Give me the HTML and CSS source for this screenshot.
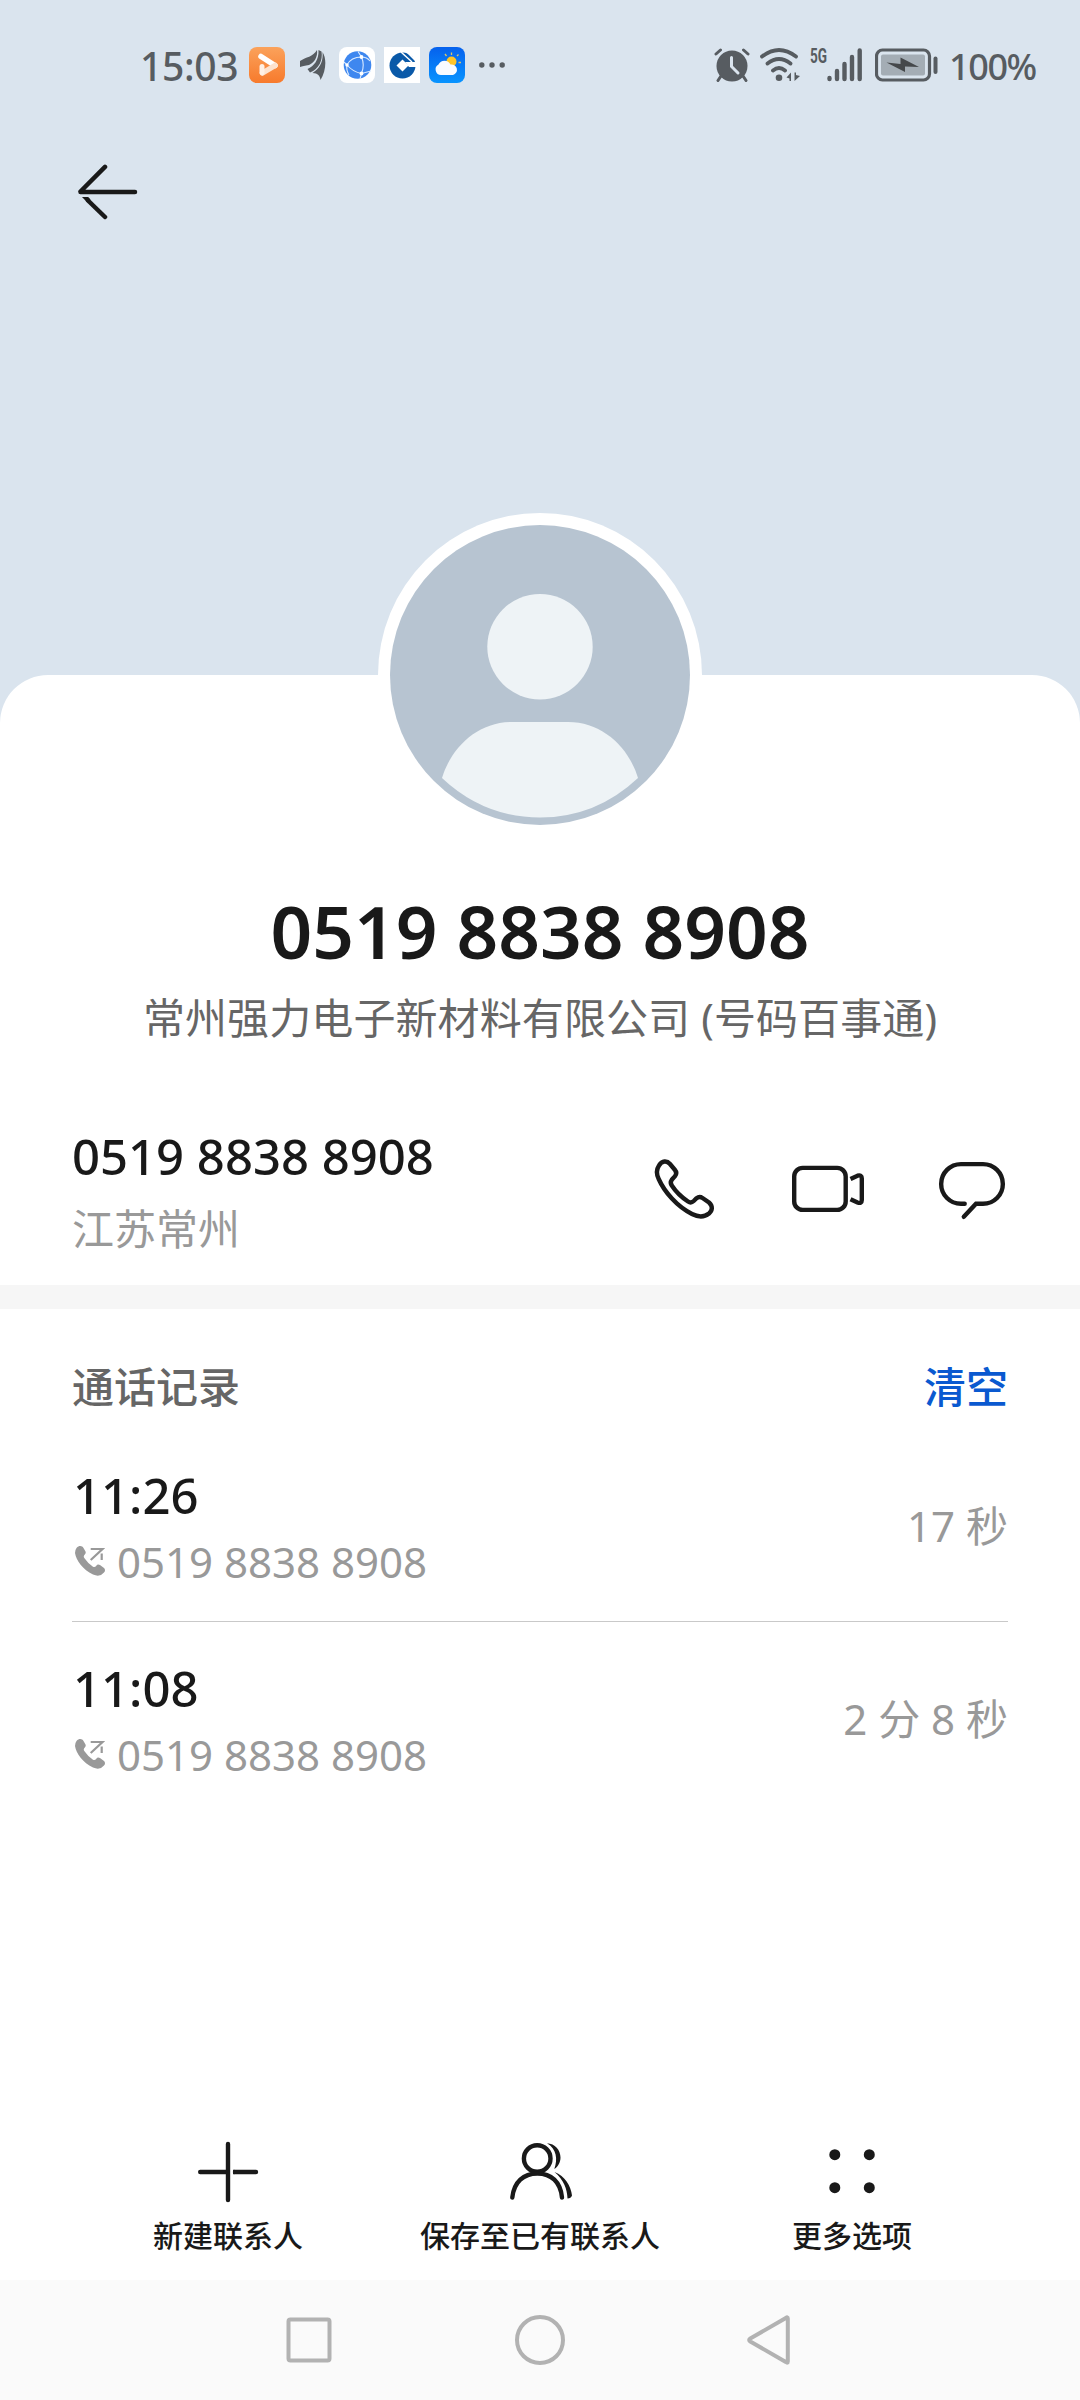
FILE: index.html
```html
<!DOCTYPE html>
<html lang="zh-CN">
<head>
<meta charset="utf-8">
<title>联系人详情</title>
<link rel="stylesheet" href="styles.css">
</head>
<body>
<div class="screen">
  <header class="hero">
    <div class="status">
      <div class="status-left">
        <span class="clock">15:03</span>
        <svg class="app" viewBox="0 0 36 36">
          <defs><linearGradient id="orange" x1="0" y1="0" x2="0" y2="1"><stop offset="0" stop-color="#fba25b"/><stop offset="1" stop-color="#f77a2c"/></linearGradient></defs>
          <rect width="36" height="36" rx="8" fill="url(#orange)"/>
          <path d="M12 9.500L26 18.500" stroke="#fff" stroke-width="5.500" stroke-linecap="round"/>
          <path d="M26 18.500L13.500 26" stroke="#fde3cf" stroke-width="5.500" stroke-linecap="round"/>
          <path d="M13 19.500V25.500" stroke="#fff0e4" stroke-width="5" stroke-linecap="round"/>
        </svg>
        <svg class="wing" viewBox="0 0 26 30" fill="#575c61">
          <path d="M0 11C6 7 13 7 17 0C18 7 14 13 9 15C5 16 2 16 0 17Z"/>
          <path d="M7.500 19C14 16 19 10 18.500 0L21.500 1.500C23 10 19 19 10 22.500Z"/>
          <path d="M12.500 23C20 18 23.500 11 22.500 2C27 9 26 21 20.500 30C20 26 18 23 12.500 23Z"/>
        </svg>
        <svg class="app" viewBox="0 0 36 36">
          <rect width="36" height="36" rx="8" fill="#fff"/><circle cx="18.500" cy="18" r="13.800" fill="#3e87ef"/>
          <g fill="none" stroke="#d9eaff" stroke-width="1.100"><path d="M22.500 10Q12 10 8 18Q14 25 22.500 26.500Q26 18 22.500 10M22.500 10L19 4.500M22.500 10Q28 10 31 14M8 18L5 15M8 18Q7 23 10 28M22.500 26.500L32 24M22.500 26.500L21 32"/></g>
          <g fill="#fff"><circle cx="22.500" cy="10" r="1.900"/><circle cx="8" cy="18" r="1.700"/><circle cx="22.500" cy="26.500" r="1.900"/></g>
        </svg>
        <svg class="app" viewBox="0 0 36 36">
          <rect width="36" height="36" fill="#fff"/><circle cx="18.500" cy="18.500" r="13" fill="#0a59a8"/>
          <path d="M18.500 12.500L24.500 18.500L18.500 24.500L12.500 18.500Z" fill="#fff"/>
          <path d="M21 15H33V20H25Z" fill="#fff"/><path d="M17 5L28 15M21 3L31 13" stroke="#fff" stroke-width="1.500"/>
        </svg>
        <svg class="app" viewBox="0 0 36 36">
          <defs><linearGradient id="sky" x1="0" y1="0" x2="0" y2="1"><stop offset="0" stop-color="#0661ed"/><stop offset="1" stop-color="#0894ff"/></linearGradient></defs>
          <rect width="36" height="36" rx="8" fill="url(#sky)"/>
          <path d="M22.500 5.500V8M29.500 7.500L28 9M32 15.500H29.500M16 7L17.500 9" stroke="#d9c36a" stroke-width="1.300"/>
          <circle cx="22.500" cy="14.500" r="5" fill="#ffc529"/>
          <path d="M12 28A5.600 5.600 0 0 1 9.500 17.500A6.600 6.600 0 0 1 21.500 17.500A5.400 5.400 0 0 1 24 28Z" fill="#f8fbff"/>
        </svg>
        <svg class="more" viewBox="0 0 26 6" fill="#575c61"><circle cx="2.800" cy="3" r="2.700"/><circle cx="13" cy="3" r="2.700"/><circle cx="23.200" cy="3" r="2.700"/></svg>
      </div>
      <div class="status-right">
        <svg class="alarm" viewBox="0 0 36 34">
          <circle cx="18" cy="18" r="15.500" fill="#575c61"/>
          <path d="M2 6L6.500 2M34 6L29.500 2M7 28L4 32.500M29 28L32 32.500" stroke="#575c61" stroke-width="3" stroke-linecap="round"/>
          <path d="M17.500 9.500V18.500L24 25" fill="none" stroke="#dae4ee" stroke-width="3" stroke-linecap="round"/>
        </svg>
        <svg class="wifi" viewBox="0 0 40 34" fill="none" stroke="#575c61" stroke-width="3.800" stroke-linecap="round">
          <path d="M2 8.500Q19 -4.500 36 8.500M7.500 15.500Q19 6.500 30.500 15.500M13 22.500Q19 17.500 25 22.500"/>
          <circle cx="19" cy="29.700" r="3.300" fill="#575c61" stroke="none"/>
          <path d="M31 24.500V33H29.500V30.500L26.500 29.500ZM34.500 33V24.500H36V27L40 28Z" fill="#575c61" stroke="none"/>
        </svg>
        <span class="net">5G</span>
        <svg class="signal" viewBox="0 0 36 34" stroke="#575c61" stroke-width="4.400" stroke-linecap="round"><path d="M2.500 30V31M10 23V31M17.500 16V31M25 9V31M32.700 2.500V31"/></svg>
        <svg class="battery" viewBox="0 0 63 34">
          <rect x="1.500" y="2" width="53" height="30" rx="6" fill="none" stroke="#575c61" stroke-width="3.200"/>
          <rect x="6" y="6.500" width="44" height="21" rx="2" fill="#a4adb5"/>
          <path d="M11.500 14.500L25.500 16V9.500L44 19L30 18.500V24Z" fill="#45484b"/>
          <rect x="58.500" y="8.500" width="4" height="17.500" rx="2" fill="#575c61"/>
        </svg>
        <span class="percent">100%</span>
      </div>
    </div>
    <svg class="back" viewBox="0 0 60 56" fill="none" stroke="#191919" stroke-width="4.500">
      <path d="M27 2.900L2.500 27.500M2.500 28H57" stroke-linecap="round"/>
      <path d="M27 53L10 36.500" stroke-linecap="round"/>
      <path d="M4 33H10.200L12.500 35.500L9.300 38.500Z" fill="#191919" stroke="none"/>
    </svg>
  </header>
  <main class="sheet">
    <svg class="avatar" viewBox="0 0 324 324">
      <circle cx="162" cy="162" r="162" fill="#fff"/>
      <circle cx="162" cy="162" r="150" fill="#b7c4d1"/>
      <circle cx="162" cy="133.700" r="52.700" fill="#eef3f6"/>
      <path d="M134 209H190C225 209 251 235 260 265Q218 304.500 162 304.500T64 265C73 235 99 209 134 209Z" fill="#eef3f6"/>
    </svg>
    <h1 class="title">0519 8838 8908</h1>
    <p class="subtitle">常州强力电子新材料有限公司 (号码百事通)</p>
    <section class="contact">
      <div>
        <div class="number">0519 8838 8908</div>
        <div class="region">江苏常州</div>
      </div>
      <div class="actions">
        <svg viewBox="0 0 72 72"><path d="M11 13.500C14 8.500 19 8.500 22 12L27 18Q29.500 21 27 24.200L23.800 27.700Q21.800 30.500 23.800 33.500C28 40 34 45.500 40 49.500Q43 51.500 45.700 49L48.500 46.200Q51.500 44 54.500 46L61 50.500C65 54 64.500 58.500 61 61.500C56 65.500 50.500 65.300 44 62C29 54.500 16.500 40 10.700 27Q7 19.500 11 13.500Z"/></svg>
        <svg viewBox="0 0 72 72"><rect x="2.200" y="15.900" width="51.500" height="42" rx="8.500"/><path d="M58.500 27L65.500 23.700Q69.800 22.500 69.800 26.500V48Q69.800 52 65.500 50.500L58.500 47.200"/></svg>
        <svg viewBox="0 0 72 72" stroke-linecap="round"><path d="M28.700 51.800H25A19.850 19.850 0 0 1 25 12.100H47A19.850 19.850 0 0 1 47 51.800H40L27.800 64.800"/></svg>
      </div>
    </section>
    <section class="history">
      <div class="history-head"><h2>通话记录</h2><a class="clear">清空</a></div>
      <div class="call">
        <div>
          <div class="time">11:26</div>
          <div class="line"><svg class="out" viewBox="0 0 30 30"><path d="M1.500 2C4 -.7 7 -.5 8.500 2L10.500 5.500Q11.200 7 9.800 8.500Q8 10 9.300 12Q13 17.500 18 20.700Q20 21.500 21.300 19.700Q22.700 17.700 25 19L29 22Q31 24 29 26.500Q25 31.500 18 28.500C8 24 1 14 0 7Q0 4 1.500 2Z" fill="#999"/><path d="M15.700 3H27.500L15.700 14M26.700 7.500V14" fill="none" stroke="#999" stroke-width="2.200"/></svg><span>0519 8838 8908</span></div>
        </div>
        <div class="duration">17 秒</div>
      </div>
      <div class="call">
        <div>
          <div class="time">11:08</div>
          <div class="line"><svg class="out" viewBox="0 0 30 30"><path d="M1.500 2C4 -.7 7 -.5 8.500 2L10.500 5.500Q11.200 7 9.800 8.500Q8 10 9.300 12Q13 17.500 18 20.700Q20 21.500 21.300 19.700Q22.700 17.700 25 19L29 22Q31 24 29 26.500Q25 31.500 18 28.500C8 24 1 14 0 7Q0 4 1.500 2Z" fill="#999"/><path d="M15.700 3H27.500L15.700 14M26.700 7.500V14" fill="none" stroke="#999" stroke-width="2.200"/></svg><span>0519 8838 8908</span></div>
        </div>
        <div class="duration">2 分 8 秒</div>
      </div>
    </section>
  </main>
  <nav class="toolbar">
    <div class="tool">
      <svg viewBox="0 0 72 72" fill="none" stroke="#191919" stroke-width="4.400" stroke-linecap="round"><path d="M36 8V64M8.200 36H35M64 36H43"/><path d="M43 36H41" stroke-linecap="butt"/></svg>
      <span>新建联系人</span>
    </div>
    <div class="tool">
      <svg viewBox="0 0 72 72" fill="none" stroke="#191919" stroke-width="4.400" stroke-linecap="round"><circle cx="33.200" cy="22.500" r="13.300"/><path d="M8.300 61.500C10 46 19.500 37.500 33.400 37.500S56.500 46 58 61.500"/><path d="M43 7.200C51 7.500 56.500 14 56.500 21.500C56.500 27 53.500 31 50.300 33C54 23 52.500 13 43 7.200ZM50.500 36C61 40 67 50 68 59.500Q67 62.500 63.500 62.500C63 53 60 44 50.500 36Z" fill="#191919" stroke="none"/></svg>
      <span>保存至已有联系人</span>
    </div>
    <div class="tool">
      <svg viewBox="0 0 72 72" fill="#191919"><circle cx="18.800" cy="18.700" r="5.500"/><circle cx="53.300" cy="18.700" r="5.500"/><circle cx="18.800" cy="51.700" r="5.500"/><circle cx="53.300" cy="51.700" r="5.500"/></svg>
      <span>更多选项</span>
    </div>
  </nav>
  <footer class="navbar">
    <svg viewBox="0 0 60 60"><rect x="9.500" y="9.500" width="41" height="41" rx="2"/></svg>
    <svg viewBox="0 0 60 60"><circle cx="30" cy="30" r="23"/></svg>
    <svg viewBox="0 0 60 60"><path d="M46.800 8.500V51.500Q46.800 53.500 44.800 52L9.300 31.500Q7 30 9.300 28.500L44.800 8Q46.800 6.500 46.800 8.500Z"/></svg>
  </footer>
</div>
</body>
</html>
```
FILE: styles.css
```css
* { box-sizing: border-box; margin: 0; padding: 0; }
body { font-family: "Noto Sans", "Noto Sans CJK SC", sans-serif; color: #191919; background: #dae4ee; }
svg { display: block; flex: none; }
.screen { width: 1080px; height: 2400px; display: flex; flex-direction: column; overflow: hidden; }

.hero { height: 675px; flex: none; }
.status { height: 130px; display: flex; justify-content: space-between; padding: 0 46px 0 140px; color: #575c61; }
.status-left, .status-right { display: flex; align-items: center; height: 130px; }
.clock { font-size: 39px; font-weight: 500; letter-spacing: -.3px; line-height: 60px; width: 109px; white-space: nowrap; padding-top: 2px; }
.app { width: 36px; height: 36px; margin-right: 9px; }
.wing { width: 26px; height: 30px; margin: 0 13px 0 6px; }
.more { width: 26px; height: 6px; margin-left: 5px; }
.alarm { width: 36px; height: 34px; margin-right: 10px; }
.wifi { width: 40px; height: 34px; margin-right: 10px; }
.net { font: 700 20px/20px "Roboto", sans-serif; width: 17px; align-self: flex-start; margin-top: 46px; transform: scaleX(.68); transform-origin: 0 50%; }
.signal { width: 36px; height: 34px; margin-right: 12px; }
.battery { width: 63px; height: 34px; margin-right: 11px; }
.percent { font-size: 36px; font-weight: 500; line-height: 60px; width: 85px; letter-spacing: -1.400px; white-space: nowrap; padding-top: 4px; }
.back { width: 60px; height: 56px; margin: 34px 0 0 78px; }

.sheet { flex: 1; background: #fff; border-radius: 48px 48px 0 0; display: flex; flex-direction: column; }
.avatar { width: 324px; height: 324px; margin: -162px auto 44px; }
.title { font-weight: 600; font-size: 73px; line-height: 100px; text-align: center; }
.subtitle { font-size: 42px; letter-spacing: .1px; line-height: 60px; text-align: center; color: #666; margin-top: 7px; }
.contact { display: flex; justify-content: space-between; align-items: flex-start; height: 261px; padding: 78px 72px 0; border-bottom: 24px solid #f6f6f6; }
.number, .time { font-weight: 500; font-size: 49px; line-height: 60px; }
.time { padding-left: 1px; }
.region { font-size: 42px; line-height: 56px; color: #999; margin-top: 15px; }
.actions { display: flex; gap: 72px; margin-top: 26px; }
.actions svg { width: 72px; height: 72px; fill: none; stroke: #191919; stroke-width: 4.400px; }

.history { padding: 0 72px; }
.history-head { display: flex; justify-content: space-between; height: 119px; padding-top: 48px; font-size: 42px; line-height: 60px; }
.history-head h2 { font-size: 42px; font-weight: 500; color: #666; }
.clear { color: #0a59d0; font-weight: 500; }
.call { display: flex; justify-content: space-between; height: 193px; padding-top: 37px; }
.call + .call { border-top: 1px solid #c9c9c9; padding-top: 36px; }
.line { display: flex; height: 60px; margin-top: 7px; font-size: 42px; line-height: 60px; color: #999; }
.out { width: 30px; height: 30px; margin: 14px 12px 0 3px; }
.duration { font-size: 42px; line-height: 60px; color: #999; margin-top: 31px; }

.toolbar { flex: none; height: 180px; padding: 36px 72px 0; background: #fff; display: grid; grid-template-columns: repeat(3, 1fr); }
.tool { display: flex; flex-direction: column; align-items: center; font-size: 30px; line-height: 40px; font-weight: 500; }
.tool svg { width: 72px; height: 72px; margin-bottom: 8px; }
.navbar { flex: none; height: 120px; background: #fafafa; display: flex; justify-content: center; align-items: center; gap: 171px; }
.navbar svg { width: 60px; height: 60px; fill: none; stroke: #b2b2b2; stroke-width: 4px; }
```
